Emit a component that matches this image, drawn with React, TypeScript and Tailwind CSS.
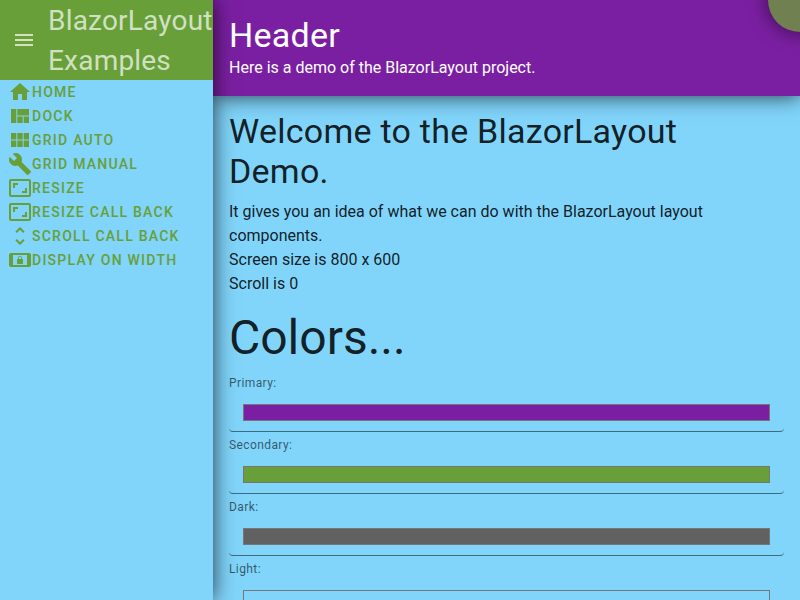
import React from "react";
import {
  MdAspectRatio,
  MdBuild,
  MdHome,
  MdMenu,
  MdScreenLockLandscape,
  MdUnfoldMore,
  MdViewModule,
  MdViewQuilt,
} from "react-icons/md";

const links = [
  { label: "Home", Icon: MdHome },
  { label: "Dock", Icon: MdViewQuilt },
  { label: "Grid Auto", Icon: MdViewModule },
  { label: "Grid Manual", Icon: MdBuild },
  { label: "Resize", Icon: MdAspectRatio },
  { label: "Resize Call Back", Icon: MdAspectRatio },
  { label: "Scroll Call Back", Icon: MdUnfoldMore },
  { label: "Display On Width", Icon: MdScreenLockLandscape },
];

const colors = [
  { label: "Primary:", swatch: "bg-[#7b1fa2]" },
  { label: "Secondary:", swatch: "bg-[#689f38]" },
  { label: "Dark:", swatch: "bg-[#616161]" },
  { label: "Light:", swatch: "bg-[#81d4fa]" },
];

function Sidebar() {
  return (
    <aside className="z-20 h-full w-[213px] shrink-0 bg-[#81d4fa] shadow-[0_0_20px_rgba(0,0,0,0.75)]">
      <div className="flex h-20 items-center overflow-hidden bg-[#689f38] text-white/70">
        <MdMenu className="mx-3 size-6 shrink-0" />
        <div className="pt-0.5 text-[28px] leading-10 tracking-[0.2px]">BlazorLayout Examples</div>
      </div>
      <nav className="pl-2 text-[#689f38]">
        {links.map(({ label, Icon }) => (
          <a key={label} className="flex h-6 items-center text-sm font-medium tracking-[1.25px] uppercase">
            <Icon className="size-6 shrink-0" />
            {label}
          </a>
        ))}
      </nav>
    </aside>
  );
}

function ColorField({ label, swatch }: { label: string; swatch: string }) {
  return (
    <div className="h-[62px]">
      <div className="h-5 text-xs leading-[18px] tracking-[0.4px] text-black/60">{label}</div>
      <div className="h-[38px] rounded-b border-b border-black/50 px-3.5 pt-2.5">
        <div className={"h-[17px] border border-[#767676] " + swatch} />
      </div>
    </div>
  );
}

export default function App() {
  return (
    <div className="flex h-[600px] w-[800px] overflow-hidden bg-[#81d4fa] font-[Roboto,sans-serif]">
      <Sidebar />
      <div className="relative flex min-w-0 grow flex-col">
        <header className="z-10 h-24 shrink-0 bg-[#7b1fa2] px-4 pt-[15px] text-white shadow-[0_0_20px_rgba(0,0,0,0.75)]">
          <h1 className="mb-px text-[34px] leading-10 tracking-[0.25px]">Header</h1>
          <p className="text-base leading-6">Here is a demo of the BlazorLayout project.</p>
        </header>
        <main className="min-h-0 grow overflow-hidden px-4 pt-[15px] text-black/87">
          <h2 className="text-[34px] leading-10 tracking-[0.25px]">Welcome to the BlazorLayout Demo.</h2>
          <p className="mt-[9px] text-base leading-6">
            It gives you an idea of what we can do with the BlazorLayout layout components.
            <br />
            Screen size is 800 x 600
            <br />
            Scroll is 0
          </p>
          <h3 className="mt-[17px] mb-2 h-[53px] text-[48px] leading-[50px]">Colors...</h3>
          {colors.map((color) => (
            <ColorField key={color.label} {...color} />
          ))}
        </main>
        <div className="absolute -top-8 -right-8 z-30 size-16 rounded-full bg-[#708050] shadow-[0_0_20px_rgba(0,0,0,0.6)]" />
      </div>
    </div>
  );
}
